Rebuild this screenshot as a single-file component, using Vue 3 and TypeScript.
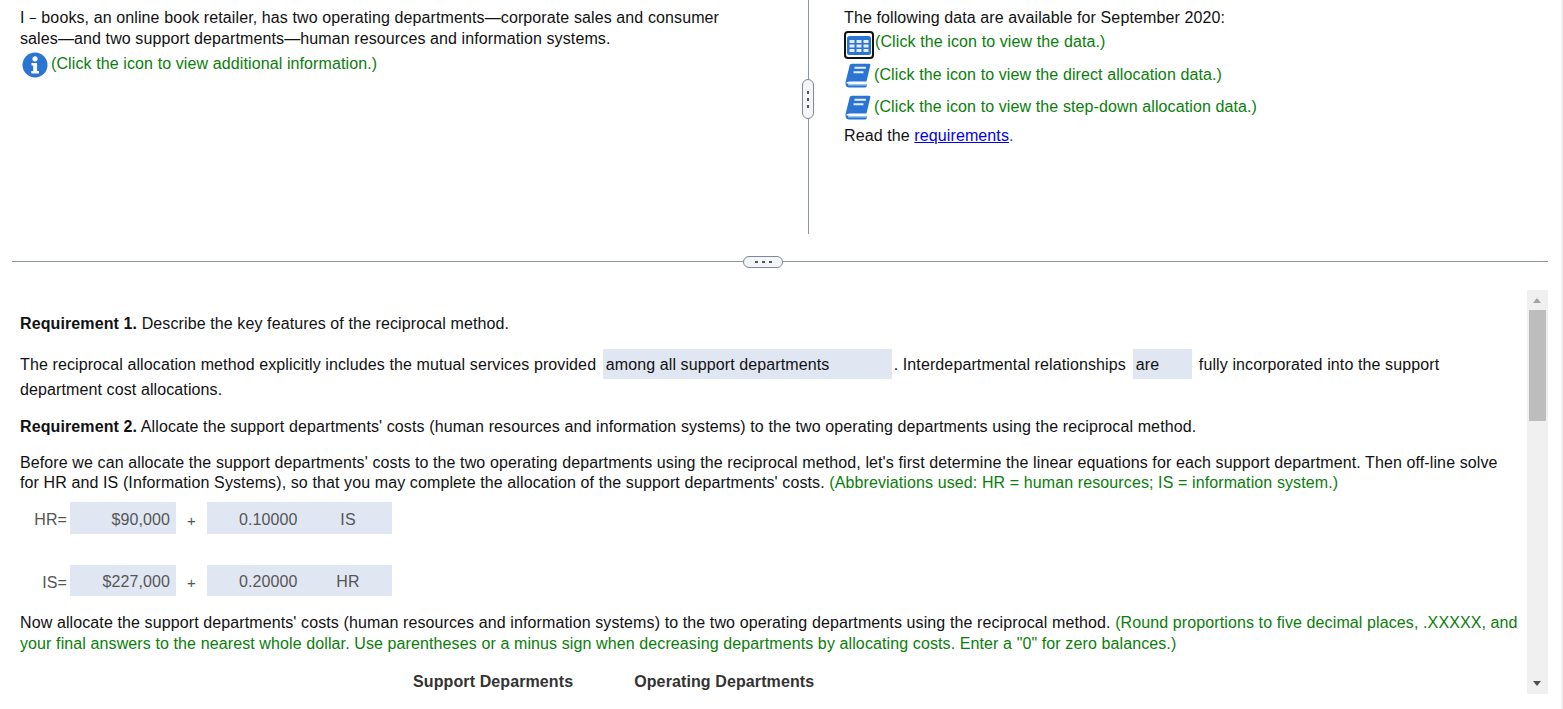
<script setup lang="ts">
const books: string[] = [
  '(Click the icon to view the direct allocation data.)',
  '(Click the icon to view the step-down allocation data.)',
]
</script>

<template>
  <div class="page">
    <div class="main">
      <section class="top">
        <div class="left">
          <p class="intro">I <span class="minus">&#8722;</span> books, an online book retailer, has two operating departments&#8212;corporate sales and consumer<br />sales&#8212;and two support departments&#8212;human resources and information systems.</p>
          <div class="info-row">
            <svg class="info" width="26" height="26" viewBox="0 0 26 26">
              <circle cx="13" cy="13" r="12.5" fill="#2a75d3" />
              <circle cx="13" cy="6.8" r="2.6" fill="#fff" />
              <path d="M9.5 11h5.600v8h1.900v2.400H9.300V19h1.900v-5.600H9.500z" fill="#fff" />
            </svg>
            <span class="green">(Click the icon to view additional information.)</span>
          </div>
        </div>
        <div class="vr">
          <span class="vhandle"><i></i><i></i><i></i></span>
        </div>
        <div class="right">
          <p class="data-title">The following data are available for September 2020:</p>
          <div class="icon-row first">
            <span class="grid-box">
              <svg width="24" height="19" viewBox="0 0 24 19">
                <rect width="24" height="19" rx="2.5" fill="#2a75d3" />
                <g fill="#e3eefa">
                  <rect x="2.500" y="4" width="5" height="3" /><rect x="9.500" y="4" width="5" height="3" /><rect x="16.500" y="4" width="5" height="3" />
                  <rect x="2.500" y="8.500" width="5" height="3" /><rect x="9.500" y="8.500" width="5" height="3" /><rect x="16.500" y="8.500" width="5" height="3" />
                  <rect x="2.500" y="13" width="5" height="3" /><rect x="9.500" y="13" width="5" height="3" /><rect x="16.500" y="13" width="5" height="3" />
                </g>
              </svg>
            </span>
            <span class="green">(Click the icon to view the data.)</span>
          </div>
          <div v-for="b in books" :key="b" class="icon-row book-row">
            <svg class="book" width="26" height="25" viewBox="0 0 26 25">
              <path d="M7 .8H24c1.200 0 1.600.7 1.300 1.800L21.500 18.500H5c-2 0-3.500.8-4.500 2L.6 19 4.500 3C4.900 1.500 5.800.8 7 .8z" fill="#2a75d3" />
              <path d="M.6 20C.2 22.500 1.400 24.400 3.500 24.400H19.800c1 0 1.600-.5 1.900-1.500l.4-2H4.500z" fill="#2a75d3" />
              <path d="M3 21h19l-.5 1.600H3.200z" fill="#9cc4f2" />
              <path d="M9.500 4.800H21M8.500 9.200H18.500" stroke="#e4effb" stroke-width="2" fill="none" />
            </svg>
            <span class="green">{{ b }}</span>
          </div>
          <p class="read">Read the <a class="link" href="#">requirements</a><span class="green">.</span></p>
        </div>
      </section>

      <div class="hr">
        <span class="hhandle"><i></i><i></i><i></i></span>
      </div>

      <section class="pane">
        <div class="content">
          <p class="req1"><b>Requirement 1.</b> Describe the key features of the reciprocal method.</p>
          <div class="fill-para">
            The reciprocal allocation method explicitly includes the mutual services provided
            <span class="select wide">among all support departments</span>
            <span class="after-wide">. Interdepartmental relationships</span>
            <span class="select small">are</span>
            <span class="after-small">fully incorporated into the support</span>
            <div class="cont">department cost allocations.</div>
          </div>
          <p class="req2"><b>Requirement 2.</b> Allocate the support departments' costs (human resources and information systems) to the two operating departments using the reciprocal method.</p>
          <p class="before">Before we can allocate the support departments' costs to the two operating departments using the reciprocal method, let's first determine the linear equations for each support department. Then off-line solve for HR and IS (Information Systems), so that you may complete the allocation of the support departments' costs. <span class="green">(Abbreviations used: HR = human resources; IS = information system.)</span></p>

          <div class="eq eq-hr">
            <span class="eq-label">HR=</span>
            <span class="amount">$90,000</span>
            <span class="plus">+</span>
            <span class="pair"><span class="coef">0.10000</span><span class="unit">IS</span></span>
          </div>
          <div class="eq eq-is">
            <span class="eq-label">IS=</span>
            <span class="amount">$227,000</span>
            <span class="plus">+</span>
            <span class="pair"><span class="coef">0.20000</span><span class="unit">HR</span></span>
          </div>

          <p class="now">Now allocate the support departments' costs (human resources and information systems) to the two operating departments using the reciprocal method. <span class="green">(Round proportions to five decimal places, .XXXXX, and your final answers to the nearest whole dollar. Use parentheses or a minus sign when decreasing departments by allocating costs. Enter a "0" for zero balances.)</span></p>

          <div class="table-head">
            <span class="th-support">Support Deparments</span>
            <span class="th-operating">Operating Departments</span>
          </div>
        </div>
        <div class="scrollbar">
          <span class="arrow up"></span>
          <span class="thumb"></span>
          <span class="spacer"></span>
          <span class="arrow down"></span>
        </div>
      </section>
    </div>
    <div class="edge"></div>
  </div>
</template>

<style>
html, body { margin: 0; background: #fff; overflow: hidden; }
</style>

<style scoped>
.page {
  display: flex;
  width: 1563px;
  height: 709px;
  overflow: hidden;
  font-family: "Liberation Sans", Arial, sans-serif;
  font-size: 16px;
  letter-spacing: 0.108px;
  color: #111;
  background: #fff;
}
.main { width: 1561px; flex: none; }
.edge { width: 2px; flex: none; background: #f0f0f0; }
p { margin: 0; }
.green { color: #0a7d0a; }
.minus { font-size: 13px; line-height: 0; }
.top { display: flex; height: 234px; }
.left { width: 808px; flex: none; box-sizing: border-box; padding: 7px 0 0 20px; }
.intro { line-height: 21px; }
.info-row { display: flex; align-items: flex-start; margin: 2px 0 0 2px; }
.info { flex: none; margin-top: 1px; }
.info-row .green { margin: 2px 0 0 3px; line-height: 21px; }
.vr { position: relative; width: 1px; flex: none; background: #8b95a5; }
.vhandle {
  position: absolute;
  left: -6px;
  top: 79px;
  box-sizing: border-box;
  width: 12px;
  height: 40px;
  display: flex;
  flex-direction: column;
  align-items: center;
  justify-content: center;
  gap: 4px;
  background: #f3f5f8;
  border: 1px solid #7f8796;
  border-radius: 6px;
}
.vhandle i { width: 2px; height: 3px; background: #555; display: block; }
.hhandle i { width: 3px; height: 2px; background: #555; display: block; }
.right { padding: 7px 0 0 35px; }
.data-title { line-height: 21px; }
.icon-row { display: flex; align-items: center; }
.icon-row.first { margin-top: 3px; height: 28px; }
.grid-box {
  box-sizing: border-box;
  width: 30px;
  height: 28px;
  flex: none;
  display: flex;
  align-items: center;
  justify-content: center;
  border: 2px solid #111;
  border-radius: 4px;
  background: #fff;
}
.grid-box svg { display: block; }
.book-row { height: 25px; margin-top: 7px; }
.book-row .book { flex: none; margin-left: 1px; }
.first .green { margin: -7px 0 0 1px; }
.book-row .green { margin: -1px 0 0 3px; }
.icon-row.first + .book-row { margin-top: 4px; }
.read { margin-top: 5px; line-height: 21px; }
.link { color: #0000ee; text-decoration: underline; }
.hr { position: relative; height: 1px; margin: 27px 13px 0 12px; background: #8b95a5; }
.hhandle {
  position: absolute;
  left: 731px;
  top: -5px;
  box-sizing: border-box;
  width: 40px;
  height: 12px;
  display: flex;
  align-items: center;
  justify-content: center;
  gap: 4px;
  background: #f3f5f8;
  border: 1px solid #7f8796;
  border-radius: 6px;
}
.pane {
  display: flex;
  height: 404px;
  margin-top: 28px;
  overflow: hidden;
}
.content { width: 1527px; flex: none; box-sizing: border-box; padding: 23px 0 0 20px; }
.req1 { line-height: 21px; }
.fill-para { margin-top: 15px; line-height: 21px; height: 51px; }
.select {
  display: inline-block;
  box-sizing: border-box;
  height: 30px;
  line-height: 30px;
  padding: 1px 0 0 3px;
  background: #e1e7f2;
}
.wide { width: 289px; margin-left: 2px; }
.small { width: 59px; margin-left: 7px; }
.after-wide { margin-left: 2px; }
.after-small { margin-left: 7px; }
.req2 { margin-top: 16px; line-height: 21px; }
.before { margin-top: 16px; width: 1490px; line-height: 20px; }
.eq { display: flex; align-items: stretch; color: #555; }
.eq-hr { margin-top: 9px; height: 32px; }
.eq-is { margin-top: 31px; height: 31px; }
.eq-label { width: 47px; text-align: right; margin-right: 3px; align-self: center; padding-top: 4px; }
.amount {
  width: 106px;
  box-sizing: border-box;
  padding: 3px 6px 0 0;
  text-align: right;
  background: #e1e7f2;
  display: flex;
  align-items: center;
  justify-content: flex-end;
}
.plus { width: 31px; text-align: center; align-self: center; font-size: 15px; padding-top: 4px; }
.pair { width: 185px; box-sizing: border-box; padding-top: 3px; display: flex; align-items: center; background: #e1e7f2; }
.coef { width: 119px; box-sizing: border-box; padding-left: 32px; }
.unit { width: 44px; text-align: center; }
.now { margin-top: 16px; width: 1505px; line-height: 21px; }
.table-head { display: flex; margin-top: 17px; font-weight: bold; color: #333; line-height: 21px; }
.th-support { margin-left: 393px; }
.th-operating { margin-left: 61px; }
.scrollbar {
  width: 21px;
  flex: none;
  box-sizing: border-box;
  padding: 0 2px;
  background: #f0f0f0;
  display: flex;
  flex-direction: column;
  align-items: stretch;
}
.arrow { display: block; height: 20px; position: relative; flex: none; }
.arrow::after {
  content: "";
  position: absolute;
  left: 4px;
  width: 0;
  height: 0;
  border-left: 4.5px solid transparent;
  border-right: 4.5px solid transparent;
}
.up::after { top: 8px; border-bottom: 5px solid #a3a3a3; }
.down::after { bottom: 8px; border-top: 5px solid #505050; }
.thumb { display: block; height: 111px; flex: none; background: #bdbdbd; }
.spacer { display: block; flex: 1; }
</style>
